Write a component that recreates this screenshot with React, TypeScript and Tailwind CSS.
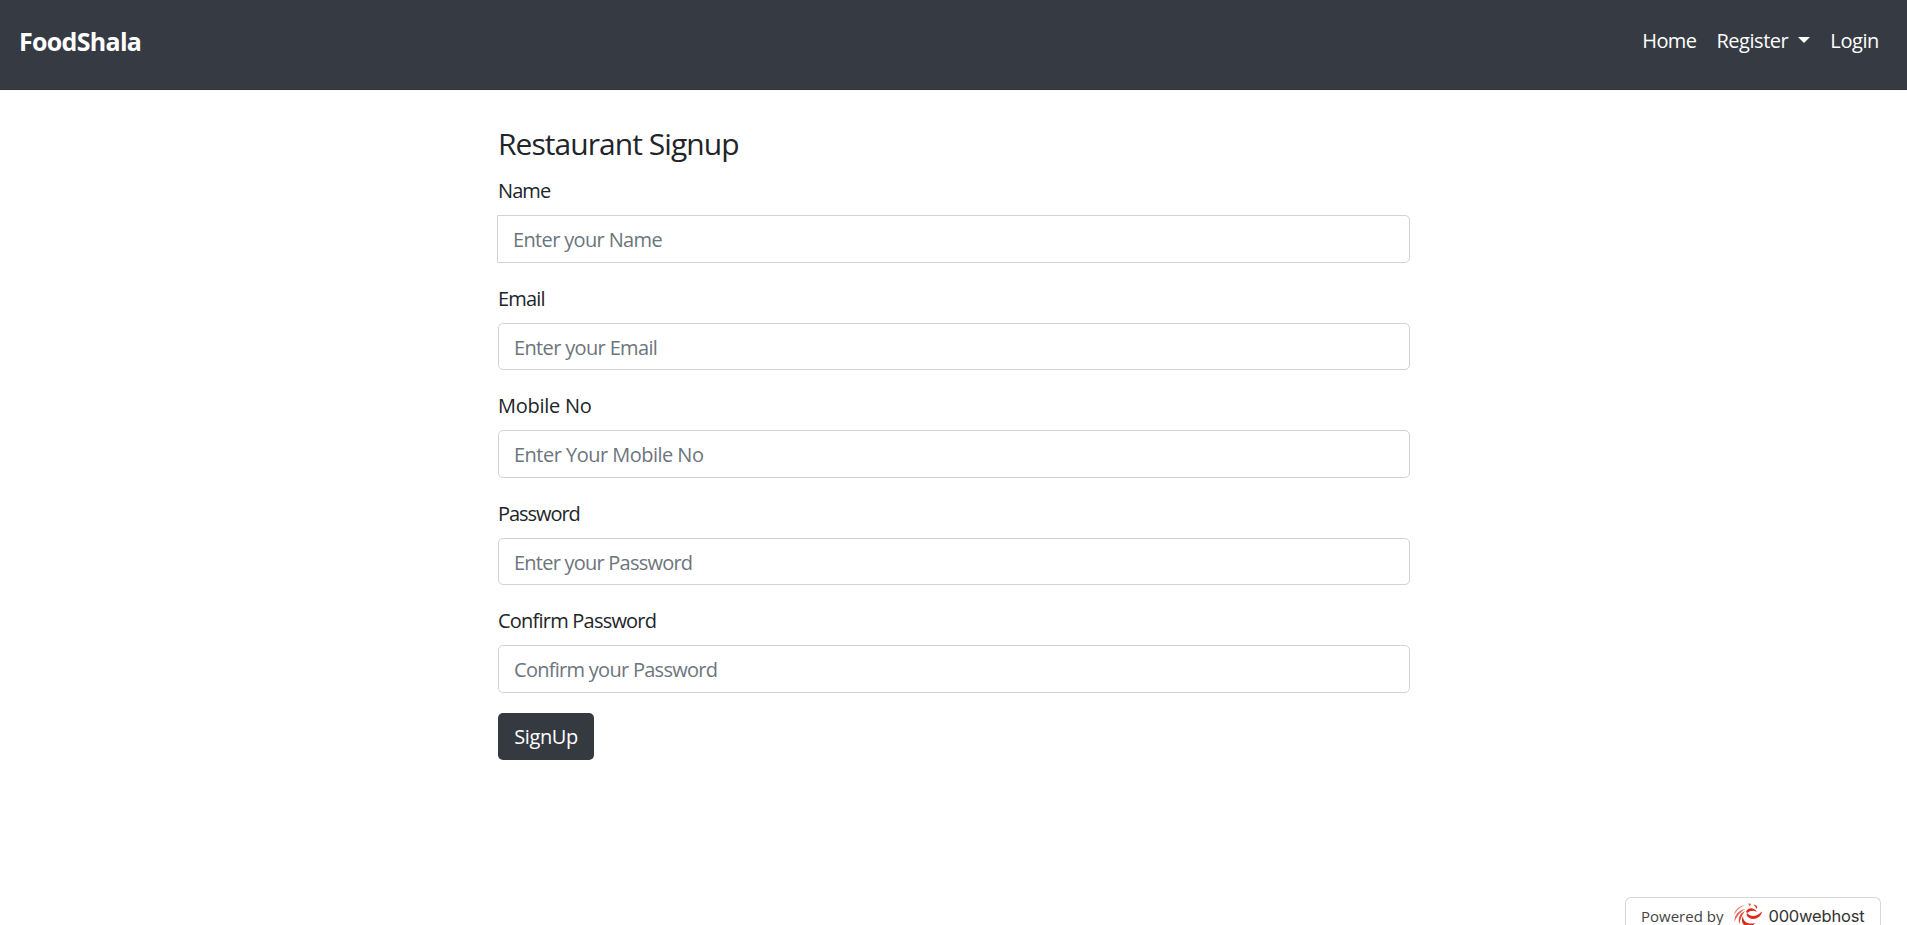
const fields = [
  { label: "Name", placeholder: "Enter your Name", type: "text", ls: "tracking-[-0.9px]", ps: "placeholder:tracking-[-0.65px]", box: "-ml-px w-[calc(100%+1px)] rounded-r-[5px]", h: "h-[48px]", mb: "mb-[21px]" },
  { label: "Email", placeholder: "Enter your Email", type: "email", ls: "tracking-[-0.8px]", ps: "placeholder:tracking-[-0.65px]", box: "w-full rounded-[5px]", h: "h-[47px] pt-[2px]", mb: "mb-[21px]" },
  { label: "Mobile No", placeholder: "Enter Your Mobile No", type: "text", ls: "tracking-[-0.27px]", ps: "placeholder:tracking-[-0.52px]", box: "w-full rounded-[5px]", h: "h-[48px]", mb: "mb-[21px]" },
  { label: "Password", placeholder: "Enter your Password", type: "password", ls: "tracking-[-1.05px]", ps: "placeholder:tracking-[-0.77px]", box: "w-full rounded-[5px]", h: "h-[47px] pt-[2px]", mb: "mb-[21px]" },
  { label: "Confirm Password", placeholder: "Confirm your Password", type: "password", ls: "tracking-[-0.78px]", ps: "placeholder:tracking-[-0.72px]", box: "w-full rounded-[5px]", h: "h-[48px]", mb: "mb-[20px]" },
];

function HostLogo() {
  return (
    <svg className="ml-[10px] mt-[5px] shrink-0" width="30" height="24" viewBox="0 0 30 24" fill="#dc2a1c">
      <path d="M1 12C1.500 7 6 3 12 2C7 4.500 4 7 1 12Z" opacity=".6" />
      <path d="M1.500 19C1 12 6 7 12 6C7 9.500 4 13 1.500 19Z" opacity=".7" />
      <path d="M6.500 21C4.500 15 7 10 12 8C9 12 7 16 6.500 21Z" opacity=".85" />
      <path d="M10 13C10 19 15 22 22 20C19 25 12 25 9.500 20C8.500 17.500 9 15 10 13Z" />
      <path d="M14 10C18 14.500 23 14 29 8.500C28 15.500 19 18.500 14.500 13.500C13.500 12.500 13.500 11 14 10Z" />
      <path d="M13 9C14 4.500 21 3.500 24 9C20 7 17 7.500 14.500 10Z" />
      <path d="M15 .500L18 .800L17 3.500Z" opacity=".8" />
      <path d="M20.500 1.500C24 2 25 4 23.500 6C23 4 22 3.500 20.500 1.500Z" />
    </svg>
  );
}

export default function App() {
  return (
    <div className="flex h-[925px] flex-col overflow-hidden bg-white font-['Open_Sans','Noto_Sans',sans-serif] text-[20px] leading-[30px] text-[#212529]">
      <nav className="flex h-[90px] shrink-0 items-start justify-between border-b border-[#32343a] bg-[#363a42] pt-[26px] pl-[19px] pr-[28px] text-white">
        <a className="text-[25px] font-bold tracking-[-0.7px]">FoodShala</a>
        <div className="flex">
          <a className="mr-[20px] tracking-[-0.6px]">Home</a>
          <a className="mr-[20px] flex tracking-[-0.45px]">
            Register
            <span className="mt-[11px] ml-[10px] h-0 border-x-[6px] border-t-[6px] border-x-transparent border-t-white" />
          </a>
          <a className="tracking-[-0.4px]">Login</a>
        </div>
      </nav>
      <main className="ml-[498px] flex w-[912px] flex-1 flex-col items-start pt-[36px]">
        <h4 className="mb-[14px] text-[30px] leading-[36px] tracking-[-0.95px]">Restaurant Signup</h4>
        {fields.map((f) => (
          <div key={f.label} className={`w-full ${f.mb}`}>
            <label className={`mb-[9px] block w-fit ${f.ls}`}>{f.label}</label>
            <input
              type={f.type}
              placeholder={f.placeholder}
              className={`block border border-[#ced4da] px-[15px] placeholder:text-[#6c757d] ${f.h} ${f.box} ${f.ps}`}
            />
          </div>
        ))}
        <button className="h-[47px] w-[96px] rounded-[5px] bg-[#343a40] tracking-[-0.4px] text-white">SignUp</button>
      </main>
      <footer className="mr-[26px] flex h-[28px] w-[256px] shrink-0 self-end rounded-t-[6px] border border-b-0 border-[#d6d6d6] pl-[15px] text-[15px] text-[#444]">
        <span className="mt-[3px] whitespace-nowrap">Powered by</span>
        <HostLogo />
        <span className="ml-[5px] mt-[3px] font-['Inter',sans-serif] text-[16.5px] tracking-[-0.2px] text-[#333]">000webhost</span>
      </footer>
    </div>
  );
}
